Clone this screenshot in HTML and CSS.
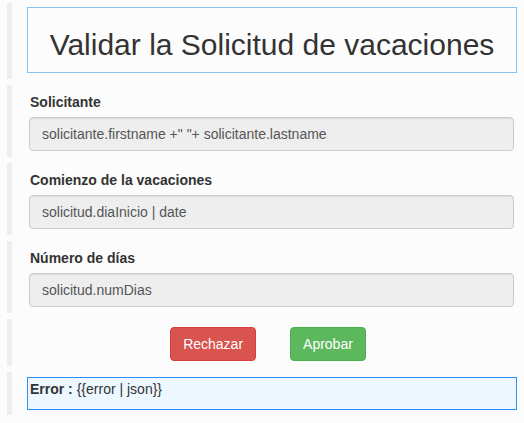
FILE: index.html
```html
<!DOCTYPE html>
<html lang="es">
<head>
<meta charset="utf-8">
<title>Validar la Solicitud de vacaciones</title>
<link rel="stylesheet" href="styles.css">
</head>
<body>
  <div class="section section-title">
    <div class="title-box">
      <h1>Validar la Solicitud de vacaciones</h1>
    </div>
  </div>
  <div class="section section-field">
    <label class="field-label">Solicitante</label>
    <div class="field-input">solicitante.firstname +" "+ solicitante.lastname</div>
  </div>
  <div class="section section-field">
    <label class="field-label">Comienzo de la vacaciones</label>
    <div class="field-input">solicitud.diaInicio | date</div>
  </div>
  <div class="section section-field">
    <label class="field-label">Número de días</label>
    <div class="field-input">solicitud.numDias</div>
  </div>
  <div class="section section-actions">
    <button class="btn btn-danger" type="button">Rechazar</button>
    <button class="btn btn-success" type="button">Aprobar</button>
  </div>
  <div class="section section-error">
    <div class="error-box"><strong>Error :</strong> {{error | json}}</div>
  </div>
</body>
</html>
```

FILE: styles.css
```css
html, body {
  margin: 0;
  padding: 0;
}
body {
  background: #fcfcfc;
  font-family: "Liberation Sans", Arial, Helvetica, sans-serif;
  font-size: 14px;
  line-height: 20px;
  color: #333;
  padding-top: 3px;
}
.section {
  margin-left: 7px;
  border-left: 5px solid #eeeeee;
  margin-bottom: 6px;
  box-sizing: border-box;
}
.section-title {
  padding: 4px 7px 6px 15px;
}
.title-box {
  border: 1px solid #82c5ef;
  padding: 20px 0 11px;
  text-align: center;
}
.title-box h1 {
  margin: 0;
  font-weight: normal;
  font-size: 30px;
  line-height: 33px;
  color: #333;
}
.section-field {
  padding: 7px 10px 6px 17px;
  display: flex;
  flex-direction: column;
}
.field-label {
  font-weight: bold;
  margin-left: 1px;
  margin-bottom: 5px;
}
.field-input {
  height: 34px;
  box-sizing: border-box;
  padding: 6px 12px;
  background: #eeeeee;
  border: 1px solid #cccccc;
  border-radius: 4px;
  color: #555;
  box-shadow: inset 0 1px 1px rgba(0,0,0,0.075);
}
.section-actions {
  padding: 8px 0 5px;
  display: flex;
  justify-content: center;
  gap: 34px;
}
.btn {
  font-family: inherit;
  font-size: 14px;
  line-height: 20px;
  padding: 6px 12px;
  border-radius: 4px;
  border: 1px solid transparent;
  color: #fff;
  cursor: pointer;
}
.btn-danger {
  background: #d9534f;
  border-color: #d43f3a;
}
.btn-success {
  background: #5cb85c;
  border-color: #4cae4c;
}
.section-error {
  padding: 5px 7px 5px 15px;
}
.error-box {
  border: 1px solid #2b8ff5;
  background: #edf7ff;
  padding: 1px 2px 10px;
}
```
